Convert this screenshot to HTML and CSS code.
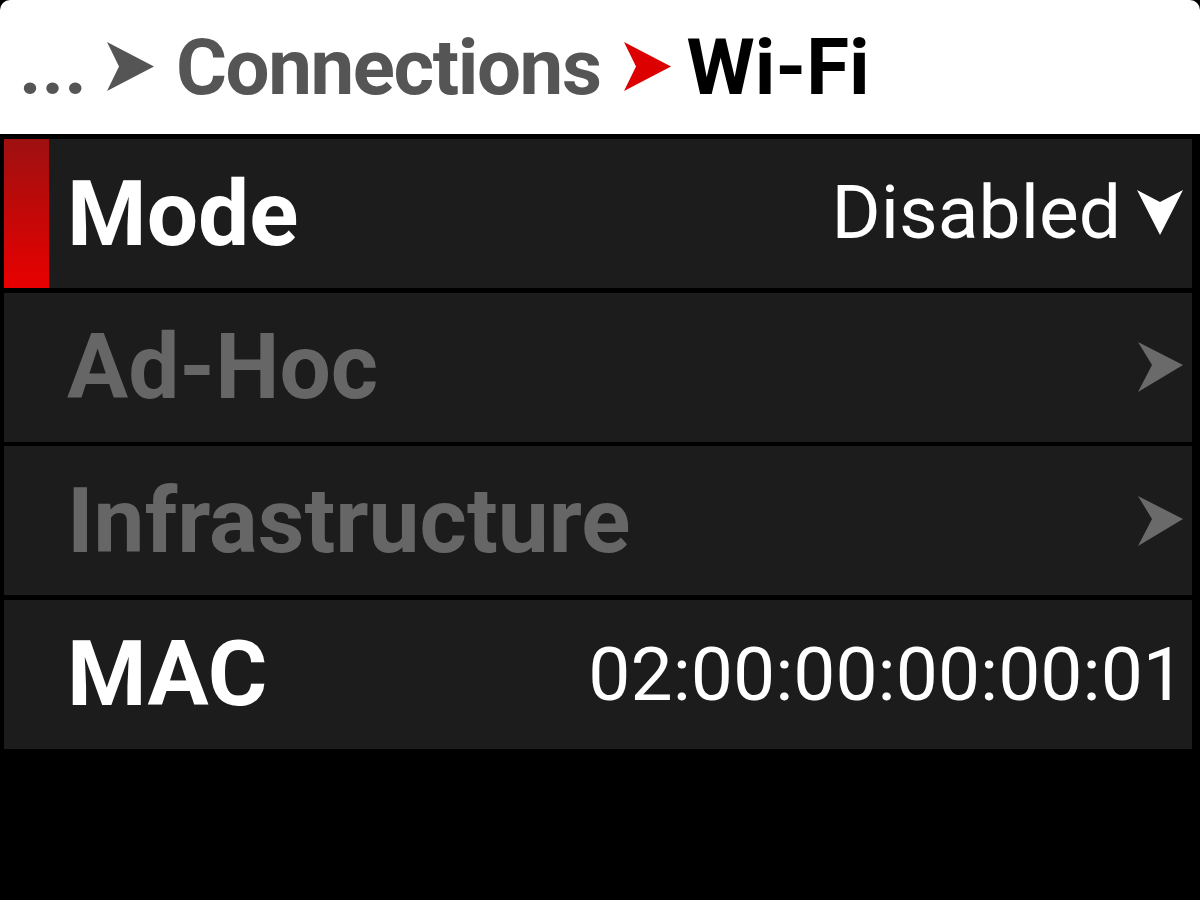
FILE: index.html
```html
<!DOCTYPE html>
<html lang="en">
<head>
<meta charset="utf-8">
<title>Wi-Fi</title>
<link rel="stylesheet" href="styles.css">
</head>
<body>
<div class="screen">
  <header class="crumbs">
    <span class="dots">...</span>
    <svg class="sep" viewBox="0 0 47 49" aria-hidden="true"><polygon points="0,0 47,24.5 0,49 12,24.5"/></svg>
    <span class="parent">Connections</span>
    <svg class="sep sep-red" viewBox="0 0 47 49" aria-hidden="true"><polygon points="0,0 47,24.5 0,49 12,24.5"/></svg>
    <span class="current">Wi-Fi</span>
  </header>
  <ul class="list">
    <li class="row selected">
      <span class="mark"></span>
      <span class="label">Mode</span>
      <span class="value">Disabled</span>
      <svg class="drop" viewBox="0 0 46 45" aria-hidden="true"><polygon points="0,0 23,12 46,0 23,45"/></svg>
    </li>
    <li class="row disabled">
      <span class="mark"></span>
      <span class="label">Ad-Hoc</span>
      <svg class="next" viewBox="0 0 45 50" aria-hidden="true"><polygon points="0,0 45,23 0,50 14,23"/></svg>
    </li>
    <li class="row disabled">
      <span class="mark"></span>
      <span class="label">Infrastructure</span>
      <svg class="next" viewBox="0 0 45 50" aria-hidden="true"><polygon points="0,0 45,23 0,50 14,23"/></svg>
    </li>
    <li class="row">
      <span class="mark"></span>
      <span class="label">MAC</span>
      <span class="value mac">02:00:00:00:00:01</span>
    </li>
  </ul>
</div>
</body>
</html>
```

FILE: styles.css
```css
* { box-sizing: border-box; }

html, body {
  margin: 0;
  padding: 0;
  background: #000;
}

.screen {
  width: 1200px;
  height: 900px;
  background: #000;
  font-family: Roboto, "Liberation Sans", sans-serif;
  overflow: hidden;
}

.crumbs {
  height: 134px;
  background: #fff;
  border-radius: 10px 10px 0 0;
  display: flex;
  align-items: center;
  padding-left: 19px;
  font-weight: 700;
  font-size: 78px;
  color: #555;
  white-space: nowrap;
}

.sep {
  width: 47px;
  height: 49px;
  fill: #555;
  margin: -2px 22px 0 20px;
  flex: none;
}

.sep-red {
  fill: #dd0000;
  margin-left: 23px;
  margin-right: 16px;
}

.parent {
  color: #555;
  letter-spacing: -1.4px;
}

.current { color: #000; }

.list {
  list-style: none;
  margin: 0;
  padding: 5px 8px 0 4px;
  display: flex;
  flex-direction: column;
  gap: 4.5px;
}

.row {
  height: 149px;
  background: #1c1c1c;
  display: flex;
  align-items: center;
  padding-right: 9px;
  color: #fff;
}

.mark {
  width: 45px;
  align-self: stretch;
  flex: none;
}

.row.selected .mark {
  background: linear-gradient(to bottom, #9e1010, #e80000);
}

.label {
  font-weight: 700;
  font-size: 91px;
  margin-left: 18px;
  flex: 1;
  white-space: nowrap;
}

.row.disabled .label {
  color: #666;
}

.value {
  font-size: 75px;
  font-weight: 400;
  white-space: nowrap;
  margin-top: -3px;
}

.value.mac {
  font-size: 75px;
  margin-right: -2px;
  margin-top: 0;
}

.drop {
  width: 46px;
  height: 45px;
  fill: #fff;
  margin-left: 16px;
  margin-top: -2px;
  flex: none;
}

.next {
  width: 45px;
  height: 50px;
  fill: #6a6a6a;
  flex: none;
}
```
